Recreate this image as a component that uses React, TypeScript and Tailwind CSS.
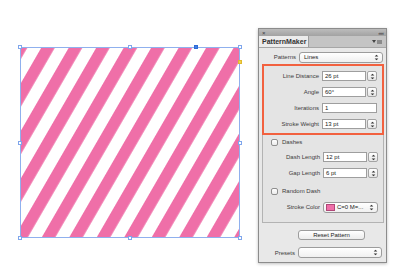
import React from "react";

const Arrows = () => (
  <svg width="5" height="7" viewBox="0 0 5 7" className="shrink-0">
    <path d="M2.5 0.7 L4.3 2.6 L0.7 2.6 Z" fill="#333" />
    <path d="M2.5 6.3 L4.3 4.4 L0.7 4.4 Z" fill="#333" />
  </svg>
);

const Stepper = () => (
  <div className="w-[10px] h-[10px] ml-[1px] rounded-[2px] border border-[#a3a3a3] bg-gradient-to-b from-[#ffffff] to-[#e6e6e6] flex items-center justify-center">
    <Arrows />
  </div>
);

const Field = ({ label, value, stepper = true, lw }: { label: string; value: string; stepper?: boolean; lw: string }) => (
  <div className="flex items-center h-[10px]">
    <div className={`${lw} text-right pr-[3px] text-[6px] leading-none text-[#3c3c3c] whitespace-nowrap`}>{label}</div>
    {stepper ? (
      <>
        <div className="w-[44px] h-[10px] bg-white border border-[#9e9e9e] text-[6px] leading-none text-[#222] pl-[2px] flex items-center">{value}</div>
        <Stepper />
      </>
    ) : (
      <div className="w-[55px] h-[10px] bg-white border border-[#9e9e9e] text-[6px] leading-none text-[#222] pl-[2px] flex items-center">{value}</div>
    )}
  </div>
);

const Check = ({ label }: { label: string }) => (
  <div className="flex items-center h-[8px] pl-[8px]">
    <div className="w-[7px] h-[7px] rounded-[2px] border border-[#8f8f8f] bg-gradient-to-b from-[#ffffff] to-[#ebebeb]" />
    <div className="ml-[4px] text-[6px] leading-none text-[#3c3c3c]">{label}</div>
  </div>
);

const Handle = ({ x, y, fill = "#ffffff", border = "#7fa6ec" }: { x: number; y: number; fill?: string; border?: string }) => (
  <div
    className="absolute w-[4px] h-[4px] border"
    style={{ left: x - 2, top: y - 2, background: fill, borderColor: border }}
  />
);

export default function App() {
  return (
    <div className="w-[400px] h-[274px] bg-white flex font-['Liberation_Sans',Arial,sans-serif] overflow-hidden">
      {/* artboard */}
      <div className="relative ml-[20px] mt-[47px] w-[220px] h-[191px] shrink-0">
        <svg width="220" height="191" className="block">
          <defs>
            <pattern
              id="stripes"
              patternUnits="userSpaceOnUse"
              width="23.8"
              height="23.8"
              patternTransform="translate(21.7 0) rotate(30)"
            >
              <rect x="0" y="0" width="11.7" height="23.8" fill="#ef6fa8" />
            </pattern>
          </defs>
          <rect x="0" y="0" width="220" height="191" fill="#ffffff" />
          <rect x="0" y="0" width="220" height="191" fill="url(#stripes)" />
          <rect x="0.5" y="0.5" width="219" height="190" fill="none" stroke="#8fb0ee" strokeWidth="1" />
        </svg>
        <Handle x={0} y={0} />
        <Handle x={110} y={0} />
        <Handle x={220} y={0} />
        <Handle x={0} y={95.5} />
        <Handle x={220} y={95.5} />
        <Handle x={0} y={191} />
        <Handle x={110} y={191} />
        <Handle x={220} y={191} />
        <Handle x={176} y={0} fill="#3f7fe6" border="#2f6ad6" />
        <Handle x={220} y={15} fill="#f3d24a" border="#e0b92e" />
      </div>

      {/* panel */}
      <div className="ml-[18px] mt-[28px] w-[129px] h-[235px] shrink-0 border border-[#8c8c8c] bg-[#e8e8e8] flex flex-col shadow-[0_1px_3px_rgba(0,0,0,0.25)]">
        <div className="h-[7px] bg-gradient-to-b from-[#bcbcbc] to-[#a2a2a2] flex items-center justify-between px-[3px] text-[#3a3a3a]">
          <span className="text-[6px] leading-none">×</span>
          <span className="text-[6px] leading-none tracking-[-1px]">««</span>
        </div>
        <div className="h-[12px] bg-[#c4c4c4] border-b border-[#a6a6a6] flex">
          <div className="w-[50px] bg-[#ececec] border-r border-[#9e9e9e] flex items-center pl-[3px] text-[7px] font-bold leading-none text-[#333]">
            PatternMaker
          </div>
          <div className="flex-1 flex items-center justify-end pr-[4px] gap-[1px]">
            <svg width="4" height="3" viewBox="0 0 4 3"><path d="M0 0 L4 0 L2 3 Z" fill="#444" /></svg>
            <div className="w-[5px] h-[4px] bg-[#8a8a8a]" />
          </div>
        </div>

        {/* Patterns row */}
        <div className="mt-[4px] flex items-center h-[10px]">
          <div className="w-[37px] text-right text-[6px] leading-none text-[#3c3c3c]">Patterns</div>
          <div className="ml-[3px] w-[84px] h-[11px] rounded-[3px] border border-[#9c9c9c] bg-gradient-to-b from-[#ffffff] to-[#f0f0f0] flex items-center justify-between pl-[4px] pr-[3px]">
            <span className="text-[6px] leading-none text-[#222]">Lines</span>
            <Arrows />
          </div>
        </div>

        {/* group box */}
        <div className="mt-[2px] ml-[3px] w-[122px] h-[159px] border border-[#b3b3b3] bg-[#e4e4e4] flex flex-col">
          <div className="-mt-px -mx-px h-[71px] border-2 border-[#f2613f] flex flex-col pt-[5px] gap-[6px]">
            <Field label="Line Distance" value="26 pt" lw="w-[58px]" />
            <Field label="Angle" value="60°" lw="w-[58px]" />
            <Field label="Iterations" value="1" stepper={false} lw="w-[58px]" />
            <Field label="Stroke Weight" value="13 pt" lw="w-[58px]" />
          </div>
          <div className="mt-[3px]">
            <Check label="Dashes" />
          </div>
          <div className="mt-[6px]">
            <Field label="Dash Length" value="12 pt" lw="w-[60px]" />
          </div>
          <div className="mt-[6px]">
            <Field label="Gap Length" value="6 pt" lw="w-[60px]" />
          </div>
          <div className="mt-[9px]">
            <Check label="Random Dash" />
          </div>
          <div className="mt-[7px] flex items-center h-[10px]">
            <div className="w-[60px] text-right pr-[3px] text-[6px] leading-none text-[#3c3c3c]">Stroke Color</div>
            <div className="w-[55px] h-[11px] rounded-[3px] border border-[#9c9c9c] bg-gradient-to-b from-[#ffffff] to-[#f0f0f0] flex items-center pl-[2px] pr-[3px]">
              <div className="w-[9px] h-[7px] bg-[#ef6fa8] border border-[#b04878]" />
              <span className="ml-[2px] text-[6px] leading-none text-[#222] flex-1 whitespace-nowrap">C=0 M=...</span>
              <Arrows />
            </div>
          </div>
        </div>

        <div className="mt-[7px] ml-[39px] w-[67px] h-[10px] rounded-[3px] border border-[#9c9c9c] bg-gradient-to-b from-[#ffffff] to-[#ececec] flex items-center justify-center text-[6px] leading-none text-[#222]">
          Reset Pattern
        </div>

        <div className="mt-[7px] flex items-center h-[11px]">
          <div className="w-[36px] text-right text-[6px] leading-none text-[#3c3c3c]">Presets</div>
          <div className="ml-[3px] w-[84px] h-[11px] rounded-[3px] border border-[#9c9c9c] bg-gradient-to-b from-[#ffffff] to-[#f0f0f0] flex items-center justify-end pr-[3px]">
            <Arrows />
          </div>
        </div>
      </div>
    </div>
  );
}
